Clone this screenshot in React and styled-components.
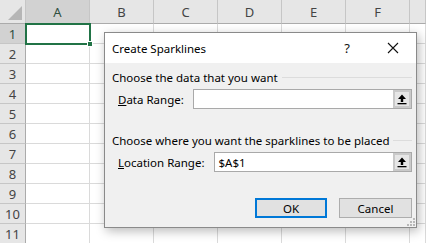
import styled, { createGlobalStyle } from "styled-components";

const GlobalStyle = createGlobalStyle`
  html, body {
    margin: 0;
    padding: 0;
    background: #fff;
  }
  * {
    box-sizing: border-box;
  }
`;

const columns = ["A", "B", "C", "D", "E", "F", ""];
const rows = [1, 2, 3, 4, 5, 6, 7, 8, 9, 10, 11];

const UploadIcon = () => (
  <svg width="12" height="12" viewBox="0 0 12 12">
    <path d="M6 1.5 L10 6 H7.2 V9 H4.8 V6 H2 Z" fill="#000" />
    <rect x="1.5" y="10" width="9" height="1.3" fill="#000" />
  </svg>
);

const App = () => {
  return (
    <Screen>
      <GlobalStyle />
      <Sheet>
        <Corner>
          <CornerMark />
        </Corner>
        {columns.map((c, i) => (
          <ColHeader key={"h" + i} $selected={c === "A"}>
            {c}
          </ColHeader>
        ))}
        {rows.map((r) => (
          <Row key={r}>
            <RowHeader $selected={r === 1}>{r}</RowHeader>
            {columns.map((c, i) => (
              <Cell key={i} $active={r === 1 && c === "A"}>
                {r === 1 && c === "A" && <FillHandle />}
              </Cell>
            ))}
          </Row>
        ))}
      </Sheet>

      <Dialog>
        <TitleBar>
          <Title>Create Sparklines</Title>
          <TitleButton>?</TitleButton>
          <TitleButton>
            <svg width="12" height="12" viewBox="0 0 12 12">
              <path d="M1 1 L11 11 M11 1 L1 11" stroke="#111" strokeWidth="1.1" />
            </svg>
          </TitleButton>
        </TitleBar>

        <Body>
          <GroupHeader>Choose the data that you want</GroupHeader>
          <FieldRow>
            <Label>
              <u>D</u>ata Range:
            </Label>
            <Input>
              <Value />
              <RefButton>
                <UploadIcon />
              </RefButton>
            </Input>
          </FieldRow>

          <GroupHeader $spaced>Choose where you want the sparklines to be placed</GroupHeader>
          <FieldRow>
            <Label>
              <u>L</u>ocation Range:
            </Label>
            <Input>
              <Value>$A$1</Value>
              <RefButton>
                <UploadIcon />
              </RefButton>
            </Input>
          </FieldRow>

          <Footer>
            <Button $primary>OK</Button>
            <Button>Cancel</Button>
          </Footer>
          <Grip>
            <svg width="8" height="8" viewBox="0 0 8 8">
              <rect x="6" y="0" width="2" height="2" fill="#b8b8b8" />
              <rect x="3" y="3" width="2" height="2" fill="#b8b8b8" />
              <rect x="6" y="3" width="2" height="2" fill="#b8b8b8" />
              <rect x="0" y="6" width="2" height="2" fill="#b8b8b8" />
              <rect x="3" y="6" width="2" height="2" fill="#b8b8b8" />
              <rect x="6" y="6" width="2" height="2" fill="#b8b8b8" />
            </svg>
          </Grip>
        </Body>
      </Dialog>
    </Screen>
  );
};

export default App;

const Screen = styled.div`
  position: relative;
  width: 426px;
  height: 243px;
  overflow: hidden;
  background: #fff;
`;

const Sheet = styled.div`
  display: grid;
  grid-template-columns: 26px repeat(6, 64px) 1fr;
  grid-template-rows: 24px;
  grid-auto-rows: 20px;
  font-family: "Segoe UI", "Noto Sans", "Open Sans", sans-serif;
  font-size: 13px;
  color: #444;
`;

const Corner = styled.div`
  position: relative;
  background: #e6e6e6;
  border-right: 1px solid #c6c6c6;
  border-bottom: 1px solid #ababab;
`;

const CornerMark = styled.div`
  position: absolute;
  right: 3px;
  bottom: 3px;
  width: 0;
  height: 0;
  border-left: 14px solid transparent;
  border-bottom: 14px solid #b6b6b6;
`;

const ColHeader = styled.div`
  display: flex;
  align-items: center;
  justify-content: center;
  background: ${(p) => (p.$selected ? "#d2d2d2" : "#e6e6e6")};
  border-right: 1px solid #c6c6c6;
  border-bottom: 1px solid #ababab;
  color: ${(p) => (p.$selected ? "#2f4f3f" : "#444")};
`;

const Row = styled.div`
  display: contents;
`;

const RowHeader = styled.div`
  display: flex;
  align-items: center;
  justify-content: center;
  background: ${(p) => (p.$selected ? "#d2d2d2" : "#e6e6e6")};
  border-right: 1px solid #ababab;
  border-bottom: 1px solid #c6c6c6;
  color: ${(p) => (p.$selected ? "#2f4f3f" : "#444")};
`;

const Cell = styled.div`
  position: relative;
  border-right: 1px solid #dadada;
  border-bottom: 1px solid #dadada;

  ${(p) =>
    p.$active &&
    `
    outline: 2px solid #217346;
    outline-offset: -1px;
    z-index: 1;
  `}
`;

const FillHandle = styled.div`
  position: absolute;
  right: -4px;
  bottom: -4px;
  width: 6px;
  height: 6px;
  background: #217346;
  border: 1px solid #fff;
`;

const Dialog = styled.div`
  position: absolute;
  left: 104px;
  top: 32px;
  width: 313px;
  height: 196px;
  display: flex;
  flex-direction: column;
  border: 1px solid #8a8a8a;
  box-shadow: 2px 3px 10px rgba(0, 0, 0, 0.28);
  font-family: "Segoe UI", "Noto Sans", "Open Sans", sans-serif;
  font-size: 11.5px;
  color: #000;
`;

const TitleBar = styled.div`
  height: 30px;
  display: flex;
  align-items: center;
  background: #fff;
  padding-left: 7px;
`;

const Title = styled.div`
  flex: 1;
`;

const TitleButton = styled.div`
  width: 46px;
  height: 30px;
  display: flex;
  align-items: center;
  justify-content: center;
  font-size: 13px;
  color: #111;
`;

const Body = styled.div`
  position: relative;
  flex: 1;
  display: flex;
  flex-direction: column;
  background: #f0f0f0;
  padding: 6px 4px 8px 7px;
`;

const GroupHeader = styled.div`
  display: flex;
  align-items: center;
  gap: 4px;
  height: 16px;
  margin-top: ${(p) => (p.$spaced ? "23px" : "0")};
  white-space: nowrap;

  &::after {
    content: "";
    flex: 1;
    height: 1px;
    background: #dcdcdc;
  }
`;

const FieldRow = styled.div`
  display: flex;
  align-items: center;
  gap: 9px;
  margin-top: 4px;
  padding-left: 6px;
`;

const Label = styled.div`
  white-space: nowrap;
`;

const Input = styled.div`
  flex: 1;
  height: 20px;
  display: flex;
  align-items: center;
  background: #fff;
  border: 1px solid #a9a9a9;
  padding: 0 0 0 4px;
`;

const Value = styled.div`
  flex: 1;
`;

const RefButton = styled.div`
  width: 18px;
  height: 18px;
  display: flex;
  align-items: center;
  justify-content: center;
  background: #e6e6e6;
  border: 2px solid #c9c9c9;
`;

const Footer = styled.div`
  display: flex;
  justify-content: flex-end;
  gap: 12px;
  margin-top: 26px;
`;

const Button = styled.div`
  width: ${(p) => (p.$primary ? "72px" : "73px")};
  height: 20px;
  display: flex;
  align-items: center;
  justify-content: center;
  background: #e1e1e1;
  border: ${(p) => (p.$primary ? "2px solid #0078d7" : "1px solid #adadad")};
`;

const Grip = styled.div`
  position: absolute;
  right: 1px;
  bottom: 1px;
  line-height: 0;
`;
